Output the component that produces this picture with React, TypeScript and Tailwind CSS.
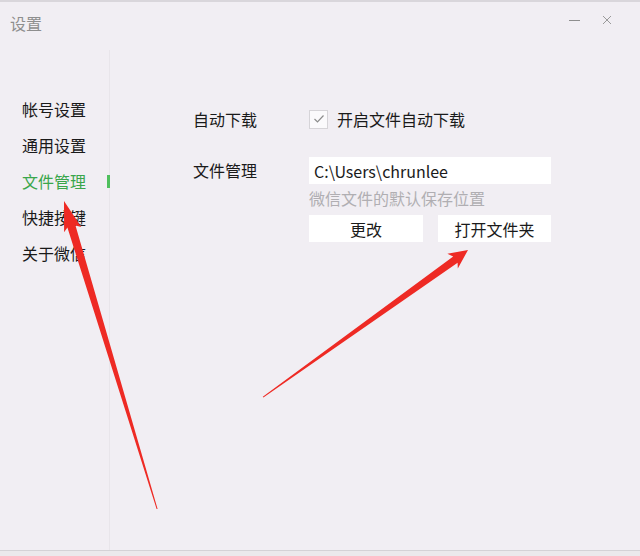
import React from "react";

const font = { fontFamily: '"Microsoft YaHei", "Noto Sans CJK SC", "Noto Sans", sans-serif' };

export default function App() {
  const items = ["帐号设置", "通用设置", "文件管理", "快捷按键", "关于微信"];
  return (
    <div
      className="relative w-[640px] h-[556px] bg-[#f1eef3] border-t-2 border-[#d9d6db] flex flex-col text-[#1a1a1a] overflow-hidden"
      style={font}
    >
      {/* title bar */}
      <div className="h-[48px] flex items-start justify-between pl-[10px] pr-[28px] pt-[10px]">
        <span className="text-[16px] leading-[22px] text-[#8e8e8e]">设置</span>
        <div className="flex items-center gap-[22px] pt-[3px]">
          <div className="w-[11px] h-[1px] bg-[#8e8e8e]" />
          <svg width="10" height="10" viewBox="0 0 10 10">
            <path d="M1 1 L9 9 M9 1 L1 9" stroke="#9a9a9a" strokeWidth="1" />
          </svg>
        </div>
      </div>

      {/* main */}
      <div className="flex-1 flex">
        <div className="w-[110px] border-r border-[#e8e5ea] pt-[41px] flex flex-col">
          {items.map((t) => (
            <div key={t} className="h-[36px] flex items-center pl-[22px]">
              <span
                className={
                  "text-[16px] " + (t === "文件管理" ? "text-[#3aa64b]" : "text-[#1a1a1a]")
                }
              >
                {t}
              </span>
              {t === "文件管理" && <div className="ml-auto mr-[-1px] w-[3px] h-[13px] bg-[#4fbf5d]" />}
            </div>
          ))}
        </div>

        <div className="flex-1 pl-[83px] pt-[55px] flex flex-col">
          <div className="flex items-center h-[28px]">
            <span className="w-[116px] text-[16px]">自动下载</span>
            <div className="w-[19px] h-[19px] border border-[#d6d4d8] bg-[#fbfafc] flex items-center justify-center">
              <svg width="12" height="10" viewBox="0 0 12 10">
                <path d="M1.5 5 L4.5 8 L10.5 1.5" fill="none" stroke="#8c8c8c" strokeWidth="1.2" />
              </svg>
            </div>
            <span className="ml-[9px] text-[16px]">开启文件自动下载</span>
          </div>

          <div className="flex mt-[24px]">
            <span className="w-[116px] text-[16px] leading-[27px]">文件管理</span>
            <div className="flex flex-col w-[242px]">
              <div className="h-[27px] bg-white flex items-center pl-[5px] text-[16px]">C:\Users\chrunlee</div>
              <div className="mt-[5px] text-[16px] leading-[18px] text-[#b0aeb2]">微信文件的默认保存位置</div>
              <div className="mt-[8px] flex gap-[15px]">
                <div className="w-[114px] h-[27px] bg-white flex items-center justify-center text-[16px]">更改</div>
                <div className="w-[113px] h-[27px] bg-white flex items-center justify-center text-[16px]">打开文件夹</div>
              </div>
            </div>
          </div>
        </div>
      </div>

      <div className="h-[6px] border-t border-[#d4d2d6] bg-[#ebe9ec]" />

      {/* annotation arrows */}
      <svg className="absolute left-0 top-0 pointer-events-none" width="640" height="556" viewBox="0 0 640 556">
        <path
          d="M64 199 L81.3 225.1 L75.5 223.5 L157.6 507 L156.6 507 L67.4 225.6 L64.1 230.3 Z"
          fill="#ee2a24"
        />
        <path
          d="M468 248 L457.8 266.4 L457.6 260.7 L263.4 395.6 L262.8 394.8 L453.2 254.5 L447.4 251.8 Z"
          fill="#ee2a24"
        />
      </svg>
    </div>
  );
}
